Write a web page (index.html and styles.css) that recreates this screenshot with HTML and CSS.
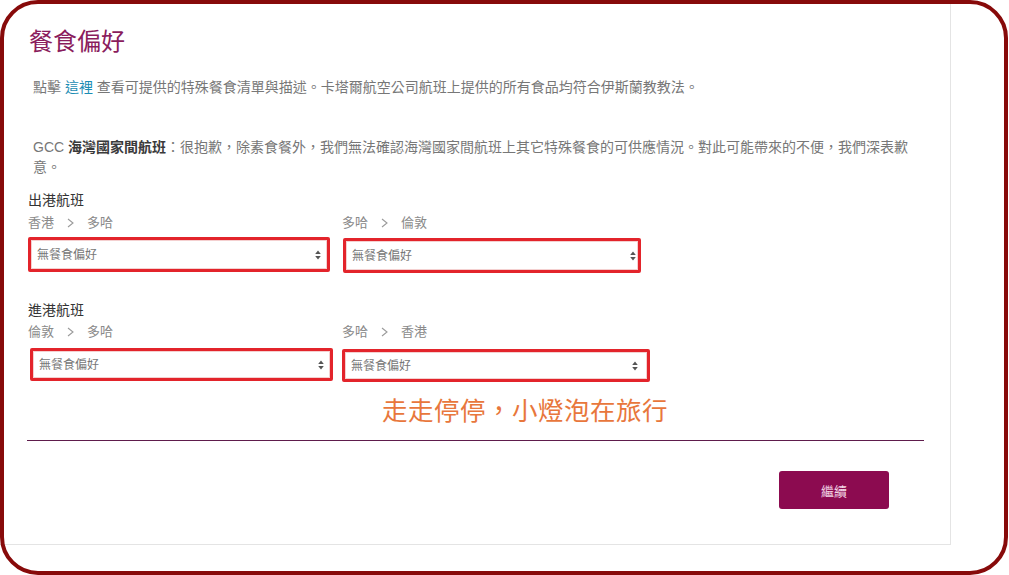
FILE: index.html
```html
<!DOCTYPE html>
<html lang="zh-Hant">
<head>
<meta charset="utf-8">
<title>餐食偏好</title>
<link rel="stylesheet" href="styles.css">
</head>
<body>
<div class="card">
  <h1 class="title">餐食偏好</h1>
  <p class="note note-first">點擊 <a class="link" href="#">這裡</a> 查看可提供的特殊餐食清單與描述。卡塔爾航空公司航班上提供的所有食品均符合伊斯蘭教教法。</p>
  <p class="note note-gcc"><span class="gcc">GCC</span> <b class="strong">海灣國家間航班</b>：很抱歉，除素食餐外，我們無法確認海灣國家間航班上其它特殊餐食的可供應情況。對此可能帶來的不便，我們深表歉意。</p>

  <section class="leg leg-out">
    <h2 class="leg-title">出港航班</h2>
    <div class="leg-grid">
      <div class="seg">
        <div class="route"><span>香港</span><svg class="chev" width="7" height="10" viewBox="0 0 7 10"><path d="M1 1 L6 5 L1 9" fill="none" stroke="#9a9a9a" stroke-width="1.1"/></svg><span>多哈</span></div>
        <div class="select sel-a"><span class="sel-text">無餐食偏好</span><svg class="arrows" width="6" height="10" viewBox="0 0 6 10"><path d="M3 0.5 L5.8 4 L0.2 4 Z M3 9.5 L5.8 6 L0.2 6 Z" fill="#555"/></svg></div>
      </div>
      <div class="seg">
        <div class="route"><span>多哈</span><svg class="chev" width="7" height="10" viewBox="0 0 7 10"><path d="M1 1 L6 5 L1 9" fill="none" stroke="#9a9a9a" stroke-width="1.1"/></svg><span>倫敦</span></div>
        <div class="select sel-b"><span class="sel-text">無餐食偏好</span><svg class="arrows" width="6" height="10" viewBox="0 0 6 10"><path d="M3 0.5 L5.8 4 L0.2 4 Z M3 9.5 L5.8 6 L0.2 6 Z" fill="#555"/></svg></div>
      </div>
    </div>
  </section>

  <section class="leg leg-in">
    <h2 class="leg-title">進港航班</h2>
    <div class="leg-grid">
      <div class="seg">
        <div class="route"><span>倫敦</span><svg class="chev" width="7" height="10" viewBox="0 0 7 10"><path d="M1 1 L6 5 L1 9" fill="none" stroke="#9a9a9a" stroke-width="1.1"/></svg><span>多哈</span></div>
        <div class="select sel-c"><span class="sel-text">無餐食偏好</span><svg class="arrows" width="6" height="10" viewBox="0 0 6 10"><path d="M3 0.5 L5.8 4 L0.2 4 Z M3 9.5 L5.8 6 L0.2 6 Z" fill="#555"/></svg></div>
      </div>
      <div class="seg">
        <div class="route"><span>多哈</span><svg class="chev" width="7" height="10" viewBox="0 0 7 10"><path d="M1 1 L6 5 L1 9" fill="none" stroke="#9a9a9a" stroke-width="1.1"/></svg><span>香港</span></div>
        <div class="select sel-d"><span class="sel-text">無餐食偏好</span><svg class="arrows" width="6" height="10" viewBox="0 0 6 10"><path d="M3 0.5 L5.8 4 L0.2 4 Z M3 9.5 L5.8 6 L0.2 6 Z" fill="#555"/></svg></div>
      </div>
    </div>
  </section>

  <div class="watermark">走走停停，小燈泡在旅行</div>
  <hr class="divider">
  <div class="actions"><button class="btn" type="button">繼續</button></div>
</div>
<div class="frame"></div>
</body>
</html>
```

FILE: styles.css
```css
* { box-sizing: border-box; }

html, body {
  margin: 0;
  padding: 0;
  background: #ffffff;
}

body {
  width: 1009px;
  height: 575px;
  overflow: hidden;
  position: relative;
  font-family: "Liberation Sans", "Noto Sans CJK TC", sans-serif;
  color: #333;
}

.card {
  position: relative;
  width: 951px;
  padding: 28px 0 35px 28px;
  border-right: 1px solid #e4e4e4;
  border-bottom: 1px solid #e4e4e4;
  background: #fff;
}

.title {
  margin: 0;
  font-size: 24px;
  line-height: 28px;
  font-weight: normal;
  color: #8a1c5c;
  padding-left: 1px;
}

.note {
  margin: 0;
  padding-left: 5px;
  width: 885px;
  font-size: 14px;
  line-height: 20px;
  color: #777;
}

.note-first { margin-top: 21px; }
.note-gcc { margin-top: 40px; }

.gcc { color: #777; }

.link {
  color: #1a8cb3;
  text-decoration: none;
}

.strong {
  font-weight: bold;
  color: #3a3a3a;
}

.leg-out { margin-top: 13px; }
.leg-in { margin-top: 27px; }

.leg-title {
  margin: 0;
  font-size: 14px;
  line-height: 20px;
  font-weight: normal;
  color: #333;
}

.leg-grid {
  display: grid;
  grid-template-columns: 314px 320px;
  align-items: start;
}

.route {
  display: flex;
  align-items: center;
  gap: 13px;
  font-size: 13px;
  line-height: 20px;
  color: #8a8a8a;
  margin-top: 3px;
}

.leg-in .route { margin-top: 2px; }

.chev { display: block; }

.select {
  display: flex;
  align-items: center;
  justify-content: space-between;
  border: 3px solid #e3242b;
  border-radius: 2px;
  background: #fff;
  padding: 0 6px 0 6px;
  box-shadow: inset 0 0 0 1px #f4d0d0;
}

.sel-text {
  font-size: 12px;
  color: #777;
  line-height: 16px;
}

.sel-a { width: 302px; height: 35px; margin-top: 4px; }
.sel-b { width: 298px; height: 35px; margin-top: 5px; margin-left: 1px; padding-right: 2px; }
.sel-c { width: 303px; height: 33px; margin-top: 6px; margin-left: 2px; }
.sel-d { width: 308px; height: 33px; margin-top: 7px; padding-right: 9px; }

.arrows { display: block; }

.divider {
  margin: 58px 0 0 -1px;
  width: 897px;
  height: 1px;
  border: 0;
  background: #5e1c4c;
}

.actions {
  display: flex;
  justify-content: flex-end;
  width: 896px;
  padding-right: 35px;
  margin-top: 30px;
}

.btn {
  width: 110px;
  height: 38px;
  border: 0;
  border-radius: 3px;
  background: #8c0b50;
  color: #f3d6e6;
  font-family: "Liberation Sans", "Noto Sans CJK TC", sans-serif;
  font-size: 13px;
}

.watermark {
  position: absolute;
  left: 382px;
  top: 396px;
  font-size: 25.5px;
  line-height: 30px;
  color: #e8773c;
  letter-spacing: 0.5px;
}

.frame {
  position: absolute;
  top: 0;
  left: 0;
  width: 1008px;
  height: 575px;
  border: 4px solid #870a0a;
  border-radius: 38px;
  pointer-events: none;
}
```
